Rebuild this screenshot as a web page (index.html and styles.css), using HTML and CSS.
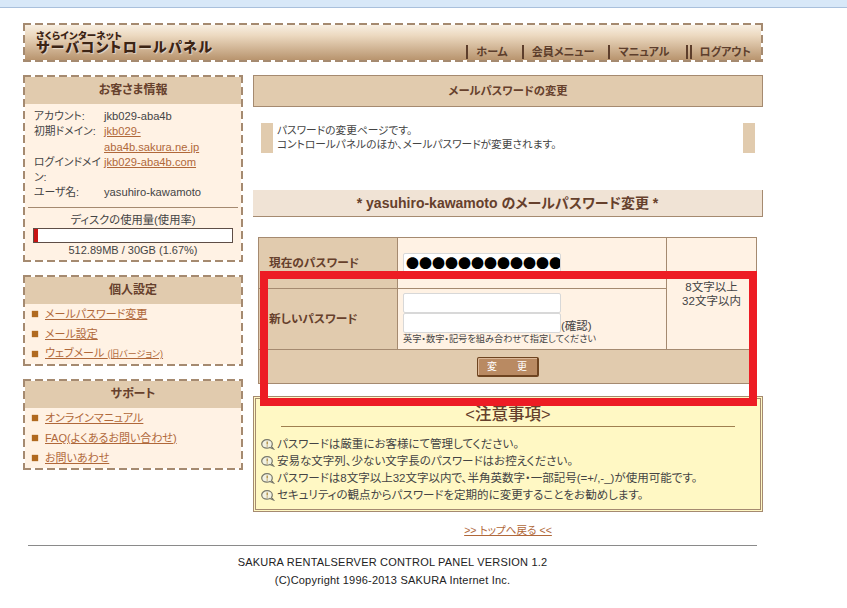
FILE: index.html
```html
<!DOCTYPE html>
<html lang="ja">
<head>
<meta charset="utf-8">
<title>サーバコントロールパネル</title>
<link rel="stylesheet" href="styles.css">
</head>
<body>
<div class="topbar"></div>
<div class="page">
  <header class="header dashed">
    <div class="logo">
      <div class="logo-small">さくらインターネット</div>
      <div class="logo-big">サーバコントロールパネル</div>
    </div>
    <nav class="nav">
      <span class="nav-item">ホーム</span>
      <span class="nav-item">会員メニュー</span>
      <span class="nav-item">マニュアル</span>
      <span class="nav-item nav-last">ログアウト</span>
    </nav>
  </header>
  <div class="columns">
    <aside class="side">
      <section class="box dashed">
        <h2 class="box-title">お客さま情報</h2>
        <div class="info">
          <dl class="info-list">
            <dt>アカウント:</dt><dd>jkb029-aba4b</dd>
            <dt>初期ドメイン:</dt><dd><a href="#">jkb029-<br>aba4b.sakura.ne.jp</a></dd>
            <dt>ログインドメイン:</dt><dd><a href="#">jkb029-aba4b.com</a></dd>
            <dt>ユーザ名:</dt><dd>yasuhiro-kawamoto</dd>
          </dl>
          <div class="disk">
            <div class="disk-title">ディスクの使用量(使用率)</div>
            <div class="disk-bar"><div class="disk-fill"></div></div>
            <div class="disk-text">512.89MB / 30GB (1.67%)</div>
          </div>
        </div>
      </section>
      <section class="box dashed">
        <h2 class="box-title">個人設定</h2>
        <ul class="links">
          <li><a href="#">メールパスワード変更</a></li>
          <li><a href="#">メール設定</a></li>
          <li><a href="#">ウェブメール <small>(旧バージョン)</small></a></li>
        </ul>
      </section>
      <section class="box dashed">
        <h2 class="box-title">サポート</h2>
        <ul class="links">
          <li><a href="#">オンラインマニュアル</a></li>
          <li><a href="#">FAQ(よくあるお問い合わせ)</a></li>
          <li><a href="#">お問いあわせ</a></li>
        </ul>
      </section>
    </aside>
    <main class="main">
      <h1 class="main-title">メールパスワードの変更</h1>
      <div class="intro">
        <p>パスワードの変更ページです。<br>コントロールパネルのほか、メールパスワードが変更されます。</p>
      </div>
      <h2 class="sub-title">* yasuhiro-kawamoto のメールパスワード変更 *</h2>
      <table class="form">
        <tr class="row-1">
          <th>現在のパスワード</th>
          <td class="inputs"><div class="pw-box">●●●●●●●●●●●●●●●●</div></td>
          <td class="hint" rowspan="2">8文字以上<br>32文字以内</td>
        </tr>
        <tr class="row-2">
          <th>新しいパスワード</th>
          <td class="inputs">
            <div class="pw-box"></div>
            <div class="confirm"><div class="pw-box"></div><span>(確認)</span></div>
            <div class="advice">英字・数字・記号を組み合わせて指定してください</div>
          </td>
        </tr>
        <tr class="row-3">
          <td colspan="3"><button class="btn" type="button">変　　更</button></td>
        </tr>
      </table>
      <section class="notes">
        <svg class="icon-defs" width="0" height="0"><defs><g id="note"><path d="M6 .7c3 0 5.3 1.9 5.3 4.3 0 .9-.3 1.7-.8 2.3l2 2.7-3.6-1.5c-.9.4-1.9.6-2.9.6C3 9.1.7 7.3.7 5S3 .7 6 .7z" fill="#f2f2e2" stroke="#77776a" stroke-width="1.2"/><path d="M6.2 2.4v3.2M6.2 6.5v1.1" stroke="#b08a3a" stroke-width="1.3"/></g></defs></svg>
        <h3 class="notes-title">&lt;注意事項&gt;</h3>
        <ul class="notes-list">
          <li><svg class="note-icon" viewBox="0 0 14 11"><use href="#note"/></svg>パスワードは厳重にお客様にて管理してください。</li>
          <li><svg class="note-icon" viewBox="0 0 14 11"><use href="#note"/></svg>安易な文字列、少ない文字長のパスワードはお控えください。</li>
          <li><svg class="note-icon" viewBox="0 0 14 11"><use href="#note"/></svg>パスワードは8文字以上32文字以内で、半角英数字・一部記号(=+/,-_)が使用可能です。</li>
          <li><svg class="note-icon" viewBox="0 0 14 11"><use href="#note"/></svg>セキュリティの観点からパスワードを定期的に変更することをお勧めします。</li>
        </ul>
      </section>
      <div class="back"><a href="#">&gt;&gt; トップへ戻る &lt;&lt;</a></div>
    </main>
  </div>
  <footer class="footer">
    <p>SAKURA RENTALSERVER CONTROL PANEL VERSION 1.2</p>
    <p>(C)Copyright 1996-2013 SAKURA Internet Inc.</p>
  </footer>
</div>
<div class="highlight"></div>
</body>
</html>
```
FILE: styles.css
```css
* { box-sizing: border-box; }
html, body { margin: 0; padding: 0; }
body {
  background: #fff;
  color: #444;
  font: 12px/14px "Liberation Sans", "Noto Sans CJK JP", sans-serif;
  font-feature-settings: "palt";
  height: 608px;
  overflow: hidden;
  position: relative;
}
h1, h2, h3, p, ul, dl, dd { margin: 0; padding: 0; }
ul { list-style: none; }
a { color: #b0683a; text-decoration: underline; }

.topbar { height: 8px; background: #d8e8f8; border-bottom: 1px solid #a9c0dc; }
.page { width: 740px; margin: 15px 0 0 23px; }

/* dashed frame: long dashes drawn as gradients over a transparent border */
.dashed {
  --dash-h: repeating-linear-gradient(90deg, #a58a70 0 8px, transparent 8px 12px);
  --dash-v: repeating-linear-gradient(180deg, #a58a70 0 8px, transparent 8px 12px);
  --fill: #fff2e4;
  border: 2px solid transparent;
  background:
    var(--dash-h) top / 100% 2px no-repeat border-box,
    var(--dash-h) bottom / 100% 2px no-repeat border-box,
    var(--dash-v) left / 2px 100% no-repeat border-box,
    var(--dash-v) right / 2px 100% no-repeat border-box,
    var(--fill) padding-box;
}

.header {
  height: 39px;
  display: flex;
  justify-content: space-between;
  padding: 6px 10px 0 11px;
  background:
    var(--dash-h) top / 100% 2px no-repeat border-box,
    var(--dash-h) bottom / 100% 2px no-repeat border-box,
    var(--dash-v) left / 2px 100% no-repeat border-box,
    var(--dash-v) right / 2px 100% no-repeat border-box,
    linear-gradient(#f8efe2, #ecd9c0 30%, #b8946e) padding-box;
}
.logo { color: #3c2414; font-weight: 900; }
.logo-small { font-size: 9.5px; line-height: 9px; letter-spacing: .2px; }
.logo-big { font-size: 14px; line-height: 15px; letter-spacing: 1.3px; text-shadow: 1px 1px 1px #fff8; }
.nav { display: flex; align-self: flex-end; color: #5d3e2c; font-weight: 700; font-size: 11px; line-height: 14px; margin-bottom: 1px; }
.nav-item { margin-left: 14px; padding-left: 8px; border-left: 2px solid #5d3e2c; }
.nav-last { margin-left: 17px; padding-left: 7px; border-left: 6px double #5d3e2c; }

.columns { display: flex; gap: 10px; margin-top: 13px; }
.side { width: 220px; flex: none; display: flex; flex-direction: column; gap: 13px; }
.box-title {
  height: 27px;
  background: #e1cbae;
  color: #66402c;
  font-size: 12px;
  line-height: 27px;
  text-align: center;
}
.info { padding: 5px 3px 3px; }
.info-list {
  display: grid;
  grid-template-columns: 70px 1fr;
  padding: 0 0 0 6px;
  line-height: 15.3px;
  font-size: 11.2px;
}
.info-list dt { padding-right: 3px; font-size: 10.8px; }
.disk { margin-top: 6px; border-top: 1px solid #a58a70; padding-top: 5px; text-align: center; font-size: 11px; }
.disk-title { line-height: 15px; font-size: 11.3px; }
.disk-bar { margin: 0 5px; height: 15px; border: 1px solid #5e4e46; background: #fff; }
.disk-fill { width: 1.67%; min-width: 4px; height: 100%; background: #c81414; }
.disk-text { line-height: 14px; }

.links li { height: 20px; line-height: 20px; display: flex; align-items: center; gap: 7px; font-size: 11px; padding-left: 7px; }
.links li::before { content: ""; width: 6px; height: 6px; background: #b06a20; box-shadow: 0 0 1px #b06a20; }
.links small { font-size: 9px; }

.main { width: 510px; flex: none; }
.main-title {
  height: 32px;
  background: #e1cbae;
  border: 1px solid #a58a70;
  color: #66402c;
  font-size: 11.3px;
  line-height: 30px;
  text-align: center;
}
.intro {
  margin: 16px 8px 0;
  height: 30px;
  border-left: 12px solid #e1cbae;
  border-right: 12px solid #e1cbae;
  padding: 0 4px;
}
.intro p { line-height: 14px; font-size: 10.7px; }
.sub-title {
  margin-top: 37px;
  height: 27px;
  background: #f0e3d5;
  border-right: 1px solid #a58a70;
  border-bottom: 1px solid #a58a70;
  color: #66402c;
  font-size: 14px;
  line-height: 26px;
  text-align: center;
}

.form {
  margin: 20px 0 0 5px;
  width: 499px;
  height: 146px;
  border-collapse: collapse;
  table-layout: fixed;
  border: 1px solid #a58a70;
}
.form th, .form td { border: 1px solid #a58a70; padding: 0; }
.form th {
  width: 139px;
  background: #e1cbae;
  color: #66402c;
  text-align: left;
  padding-left: 10px;
  font-size: 11.7px;
}
.row-1 { height: 51px; }
.row-1 th { vertical-align: bottom; padding-bottom: 18px; }
.row-2 { height: 61px; }
.inputs { background: #fff2e4; width: 269px; padding: 0 5px !important; }
.row-1 .inputs { vertical-align: top; padding-top: 15px !important; }
.pw-box {
  width: 158px;
  height: 20px;
  flex: none;
  background: #fff;
  border: 1px solid #d8d8d8;
  border-radius: 2px;
  color: #000;
  font: 13px/18px "Noto Sans CJK JP", sans-serif;
  font-feature-settings: normal;
  white-space: nowrap;
  overflow: hidden;
  padding-left: 2px;
}
.confirm { display: flex; align-items: flex-end; }
.confirm span { font-size: 11.5px; line-height: 14px; }
.advice { font-size: 9.2px; line-height: 12px; white-space: nowrap; }
.hint { background: #fff2e4; text-align: center; font-size: 11.5px; line-height: 14px; }
.row-3 { height: 34px; }
.row-3 td { background: #e1cbae; text-align: center; }
.btn {
  display: inline-block;
  width: 62px;
  height: 20px;
  padding: 0;
  background: #b98a62;
  color: #fff;
  font: 10px/16px "Noto Sans CJK JP", sans-serif;
  border: 1px solid #6e4420;
  border-width: 1px 2px 2px 1px;
  border-radius: 2px;
  box-shadow: inset 1px 1px 0 #dcb898;
  vertical-align: middle;
}

.notes {
  margin-top: 12px;
  height: 116px;
  border: 3px double #a58a70;
  background: #fff8c4;
  padding: 6px 5px 0;
}
.icon-defs { position: absolute; }
.notes-title {
  font-size: 16.5px;
  line-height: 18px;
  font-weight: 500;
  text-align: center;
  color: #66402c;
  height: 22px;
  margin: 0 20px;
  border-bottom: 1px solid #a08050;
}
.notes-list { margin-top: 9px; font-size: 11.5px; }
.notes-list li { height: 17px; line-height: 17px; display: flex; align-items: center; white-space: nowrap; }
.note-icon { width: 14px; height: 11px; flex: none; margin-right: 2px; }

.back { margin-top: 11px; text-align: center; line-height: 15px; font-size: 10.6px; }

.footer {
  margin: 7px 6px 0 5px;
  border-top: 1px solid #8a8a8a;
  padding-top: 7px;
  text-align: center;
  color: #222;
  font-size: 11px;
  line-height: 18px;
  letter-spacing: .2px;
}

.highlight {
  position: absolute;
  left: 260px;
  top: 271px;
  width: 497px;
  height: 135px;
  border: 8px solid #ed1c24;
}
```
